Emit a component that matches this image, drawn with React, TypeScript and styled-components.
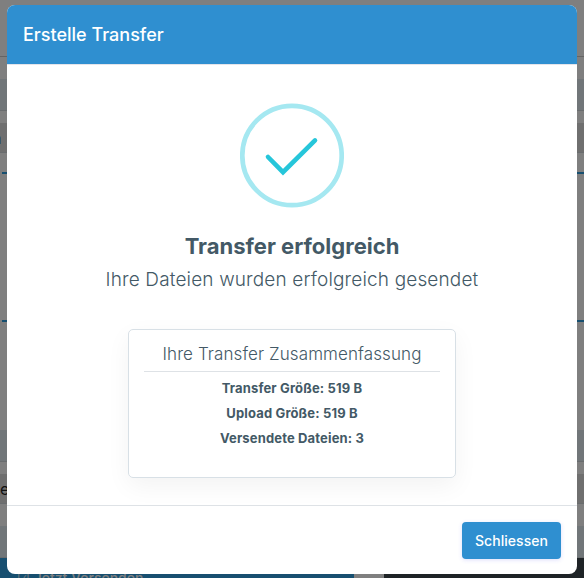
import React from 'react'
import styled, { createGlobalStyle } from 'styled-components'

const GlobalStyle = createGlobalStyle`
  html, body {
    margin: 0;
    padding: 0;
    height: 100%;
    overflow: hidden;
    background: #fff;
    font-family: Inter, "Open Sans", "Liberation Sans", sans-serif;
  }
`

const summaryRows = ['Transfer Größe: 519 B', 'Upload Größe: 519 B', 'Versendete Dateien: 3']

function SuccessIcon() {
  return (
    <svg width="104" height="105" viewBox="0 0 104 105" fill="none">
      <circle cx="52" cy="52.5" r="49.7" stroke="#a5e8f1" strokeWidth="4.7" />
      <path
        d="M28 54 43 69.2 75 37.4"
        stroke="#26c6da"
        strokeWidth="4.6"
        strokeLinecap="round"
        strokeLinejoin="miter"
      />
    </svg>
  )
}

function App() {
  return (
    <Page>
      <GlobalStyle />
      <TopLine />
      <Band $top={22} />
      <Band $top={12} $tone="grey">
        <SideText $shift={-8}>n</SideText>
      </Band>
      <Rule $top={19} />
      <Rule $top={146} />
      <Band $top={108} />
      <Band $top={12} $tone="grey">
        <SideText $shift={0}>e</SideText>
      </Band>
      <Band $top={22} />
      <BottomBar>
        <SendButton>☑ Jetzt Versenden</SendButton>
        <BottomGap />
        <BottomDark />
      </BottomBar>
      <Backdrop />
      <Modal>
        <ModalHeader>Erstelle Transfer</ModalHeader>
        <ModalBody>
          <SuccessIcon />
          <Title>Transfer erfolgreich</Title>
          <Subtitle>Ihre Dateien wurden erfolgreich gesendet</Subtitle>
          <SummaryCard>
            <SummaryTitle>Ihre Transfer Zusammenfassung</SummaryTitle>
            {summaryRows.map((row) => (
              <SummaryRow key={row}>{row}</SummaryRow>
            ))}
          </SummaryCard>
        </ModalBody>
        <ModalFooter>
          <CloseButton>Schliessen</CloseButton>
        </ModalFooter>
      </Modal>
    </Page>
  )
}

const Page = styled.div`
  position: relative;
  width: 584px;
  height: 578px;
  overflow: hidden;
  background: #fff;
`

const TopLine = styled.div`
  margin-top: 56px;
  height: 1px;
  background: #c8c8c8;
`

const Band = styled.div<{ $top: number; $tone?: 'blue' | 'grey' }>`
  margin-top: ${(p) => p.$top}px;
  height: ${(p) => (p.$tone === 'grey' ? 30 : 32)}px;
  display: flex;
  align-items: center;
  background: ${(p) => (p.$tone === 'grey' ? '#dedede' : '#e2ecf3')};
  border-bottom: 1px solid #d2d8dc;
  box-sizing: border-box;
`

const SideText = styled.span<{ $shift: number }>`
  font-size: 16px;
  color: #222;
  margin-left: ${(p) => p.$shift}px;
`

const Rule = styled.div<{ $top: number }>`
  margin: ${(p) => p.$top}px 0 0 2px;
  height: 2px;
  background: #2e9ee0;
`

const BottomBar = styled.div`
  display: flex;
  height: 20px;
`

const SendButton = styled.div`
  width: 354px;
  height: 20px;
  background: #2e9ee0;
  color: #fff;
  box-sizing: border-box;
  padding: 10px 0 0 17px;
  font-size: 14px;
  line-height: 20px;
  font-weight: 500;
  overflow: hidden;
`

const BottomGap = styled.div`
  width: 30px;
`

const BottomDark = styled.div`
  flex: 1;
  background: #3c464c;
`

const Backdrop = styled.div`
  position: absolute;
  inset: 0;
  background: rgba(0, 0, 0, 0.5);
`

const Modal = styled.div`
  position: absolute;
  top: 5px;
  left: 7px;
  width: 570px;
  height: 569px;
  display: flex;
  flex-direction: column;
  background: #fff;
  border-radius: 8px;
  overflow: hidden;
`

const ModalHeader = styled.div`
  height: 60px;
  box-sizing: border-box;
  padding: 0 16px;
  display: flex;
  align-items: center;
  background: #2f8fd0;
  border-bottom: 1px solid #e4e4ea;
  color: #fff;
  font-size: 18px;
  font-weight: 500;
`

const ModalBody = styled.div`
  flex: 1;
  display: flex;
  flex-direction: column;
  align-items: center;
  padding-top: 38px;
  color: #435966;
`

const Title = styled.h2`
  margin: 24px 0 0;
  font-size: 22px;
  line-height: 28px;
  font-weight: 700;
`

const Subtitle = styled.p`
  margin: 7px 0 0;
  font-size: 19px;
  line-height: 26px;
  font-weight: 300;
  letter-spacing: 0.15px;
`

const SummaryCard = styled.div`
  margin-top: 36px;
  width: 328px;
  height: 149px;
  box-sizing: border-box;
  padding: 12px 15px 0;
  display: flex;
  flex-direction: column;
  border: 1px solid #d8e0e6;
  border-radius: 5px;
  box-shadow: 0 8px 24px rgba(0, 0, 0, 0.05);
`

const SummaryTitle = styled.div`
  height: 29px;
  margin-bottom: 4px;
  text-align: center;
  font-size: 17px;
  line-height: 24px;
  font-weight: 300;
  letter-spacing: 0.1px;
  border-bottom: 1px solid #dee2e6;
`

const SummaryRow = styled.div`
  height: 25px;
  text-align: center;
  font-size: 13px;
  line-height: 25px;
  font-weight: 700;
  letter-spacing: 0.15px;
`

const ModalFooter = styled.div`
  height: 69px;
  box-sizing: border-box;
  display: flex;
  justify-content: flex-end;
  padding: 16px;
  border-top: 1px solid #dee2e6;
`

const CloseButton = styled.button`
  width: 99px;
  height: 37px;
  padding: 0;
  border: none;
  border-radius: 4px;
  background: #2f8fd0;
  box-shadow: 0 1px 4px rgba(90, 90, 240, 0.2);
  color: #fff;
  font-family: inherit;
  font-size: 14px;
  font-weight: 500;
  letter-spacing: 0.05px;
`

export default App
